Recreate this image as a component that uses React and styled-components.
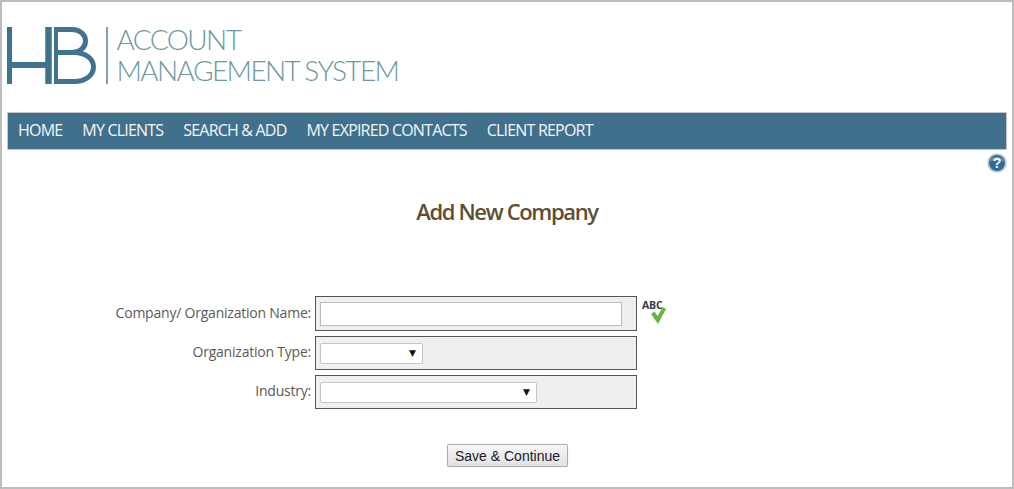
import React from "react";
import styled, { createGlobalStyle } from "styled-components";

const GlobalStyle = createGlobalStyle`
  html, body { margin: 0; padding: 0; background: #fff; }
  body { font-family: "Open Sans", "Liberation Sans", sans-serif; }
`;

const Frame = styled.div`
  box-sizing: border-box;
  width: 1014px;
  height: 489px;
  border: 2px solid #bdbdbd;
  background: #fff;
  overflow: hidden;
`;

const Header = styled.header`
  display: flex;
  align-items: flex-start;
  height: 108px;
  padding: 25px 0 0 4px;
  box-sizing: border-box;
`;

const Divider = styled.div`
  width: 1.5px;
  height: 57px;
  margin: 0 9px 0 8px;
  background: #7fa3a9;
`;

const LogoText = styled.div`
  margin-top: -3px;
  font-family: Lato, "Open Sans", sans-serif;
  font-weight: 300;
  font-size: 28px;
  line-height: 31px;
  color: #6b999f;
  white-space: nowrap;
  letter-spacing: -1.6px;
`;

const Nav = styled.nav`
  box-sizing: border-box;
  display: flex;
  align-items: center;
  gap: 20px;
  height: 38px;
  margin: 2px 5px 0 5px;
  padding: 0 0 3px 10px;
  background: #41708c;
  border: 1px solid #c4c8ca;
`;

const NavLink = styled.a`
  font-family: "Open Sans", sans-serif;
  font-size: 16px;
  color: #f4f7f9;
  white-space: nowrap;
  letter-spacing: -0.8px;
`;

const HelpRow = styled.div`
  display: flex;
  justify-content: flex-end;
  height: 22px;
  padding: 3px 5px 0 0;
`;

const Title = styled.h1`
  margin: 18px 0 0;
  font-family: "Open Sans", sans-serif;
  font-size: 22px;
  line-height: 36px;
  font-weight: 600;
  color: #5f4e30;
  text-align: center;
  letter-spacing: -1.35px;
`;

const Form = styled.form`
  display: grid;
  grid-template-columns: 309px 322px 1fr;
  column-gap: 4px;
  row-gap: 5px;
  margin-top: 67px;
  align-items: center;
`;

const Label = styled.label`
  padding-bottom: 3px;
  font-size: 14px;
  color: #5a5a5a;
  text-align: right;
  letter-spacing: -0.22px;
`;

const Cell = styled.div`
  box-sizing: border-box;
  display: flex;
  align-items: center;
  height: ${(p) => p.$h}px;
  padding: 0 0 0 4px;
  background: #efefef;
  border: 1px solid #555;
`;

const TextInput = styled.input`
  box-sizing: border-box;
  width: 302px;
  height: 24px;
  padding: 0 4px;
  background: #fff;
  border: 1px solid #bcbcbc;
  outline: none;
`;

const SelectBox = styled.div`
  box-sizing: border-box;
  display: flex;
  align-items: center;
  justify-content: flex-end;
  width: ${(p) => p.$w}px;
  height: 21px;
  padding-right: 6px;
  background: #fff;
  border: 1px solid #c6c6c6;
  border-radius: 2px;
  font-family: "DejaVu Sans", sans-serif;
  font-size: 9px;
  color: #111;
`;

const SpellCheck = styled.div`
  display: flex;
  align-items: flex-start;
  height: 35px;
`;

const Actions = styled.div`
  display: flex;
  justify-content: center;
  margin-top: 35px;
  padding-left: 1px;
`;

const SaveButton = styled.button`
  box-sizing: border-box;
  width: 121px;
  height: 23px;
  padding: 0;
  font-family: "Liberation Sans", Arial, sans-serif;
  font-size: 14px;
  color: #1a1a2a;
  background: linear-gradient(#f6f6f6, #e2e2e2);
  border: 1px solid #adadad;
  border-radius: 2px;
  box-shadow: 0 0 1px #bbb;
`;

const HbLogo = () => (
  <svg width="92" height="57" viewBox="0 0 92 57" fill="none" stroke="#3f7390" strokeWidth="5">
    <path d="M3.500 0v57" />
    <path d="M3 38h37" strokeWidth="6" />
    <path d="M42.500 0v57" strokeWidth="6.500" />
    <path d="M50 0v57" strokeWidth="4" />
    <path d="M48 2.500H66c8 0 13.500 5 13.500 11.500S74 25.500 66 25.500H48" />
    <path d="M52 25.500H68c11 0 19.500 6 19.500 14.500S79 54.500 68 54.500H48" />
  </svg>
);

const HelpIcon = () => (
  <svg width="20" height="20" viewBox="0 0 20 20">
    <circle cx="10" cy="10" r="9.800" fill="#c4c9ce" />
    <circle cx="10" cy="10" r="8" fill="#2f6c9e" />
    <path d="M3 8.500a7.200 6 0 0 1 14 0c-4-2-10-2-14 0z" fill="#6b9cc2" />
    <text x="10" y="15" textAnchor="middle" fontFamily="Liberation Sans, sans-serif" fontWeight="700" fontSize="14" fill="#fff">?</text>
  </svg>
);

const AbcCheck = () => (
  <svg width="28" height="30" viewBox="0 0 28 30">
    <text x="1" y="13" fontFamily="Open Sans, sans-serif" fontWeight="700" fontSize="10.500" letterSpacing="-0.2" fill="#3a3a3a">ABC</text>
    <path d="M10 18l3.500-2.500 3 4.500L22 11l3 2L17 28z" fill="#6db33f" />
  </svg>
);

const links = ["HOME", "MY CLIENTS", "SEARCH & ADD", "MY EXPIRED CONTACTS", "CLIENT REPORT"];

export default function App() {
  return (
    <Frame>
      <GlobalStyle />
      <Header>
        <HbLogo />
        <Divider />
        <LogoText>
          ACCOUNT
          <br />
          MANAGEMENT SYSTEM
        </LogoText>
      </Header>
      <Nav>
        {links.map((l) => (
          <NavLink key={l}>{l}</NavLink>
        ))}
      </Nav>
      <HelpRow>
        <HelpIcon />
      </HelpRow>
      <Title>Add New Company</Title>
      <Form>
        <Label>Company/ Organization Name:</Label>
        <Cell $h={35}>
          <TextInput type="text" />
        </Cell>
        <SpellCheck>
          <AbcCheck />
        </SpellCheck>
        <Label>Organization Type:</Label>
        <Cell $h={34}>
          <SelectBox $w={103}>▼</SelectBox>
        </Cell>
        <span />
        <Label>Industry:</Label>
        <Cell $h={34}>
          <SelectBox $w={217}>▼</SelectBox>
        </Cell>
        <span />
      </Form>
      <Actions>
        <SaveButton type="button">Save &amp; Continue</SaveButton>
      </Actions>
    </Frame>
  );
}
